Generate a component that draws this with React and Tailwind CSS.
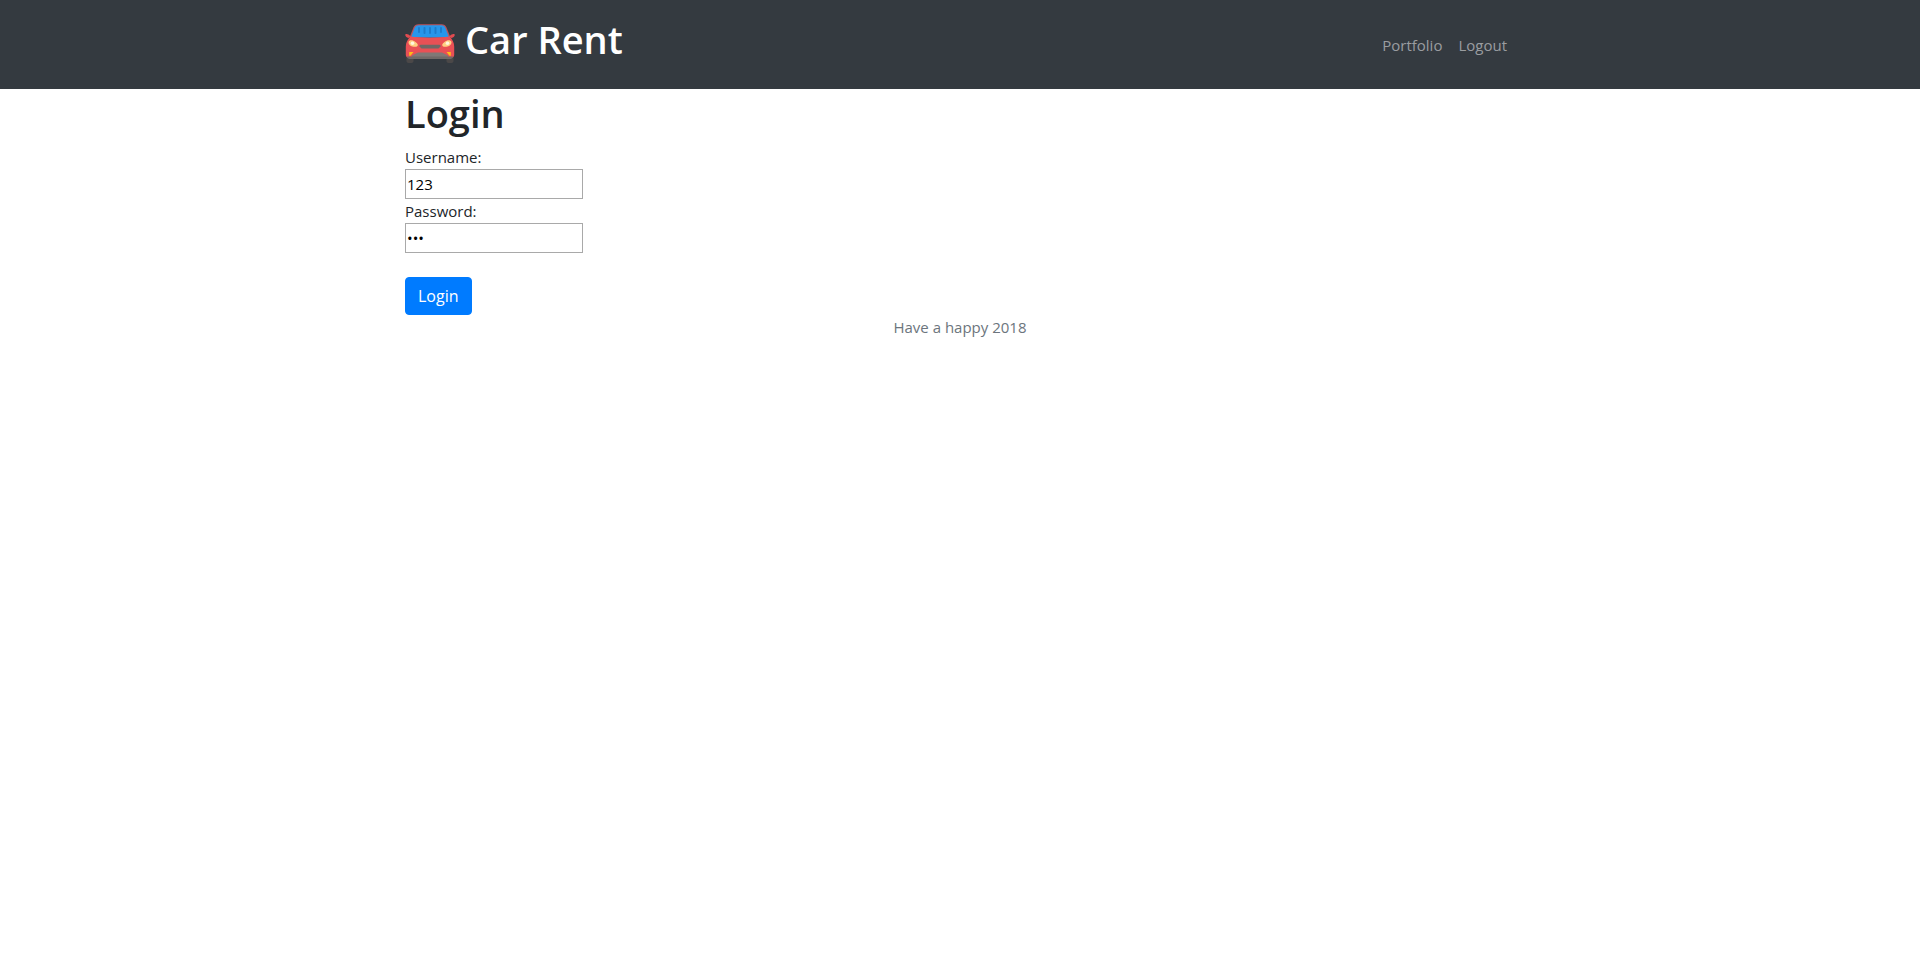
function CarIcon() {
  return (
    <svg viewBox="0 0 50 40" className="h-10 w-[50px] shrink-0" aria-hidden="true">
      <rect x="1.5" y="33" width="7" height="7" rx="2" fill="#4b4848" />
      <rect x="41.5" y="33" width="7" height="7" rx="2" fill="#4b4848" />
      <path d="M13.500 1.200H36.500C39 1.200 40.500 2.200 41.500 4.500L45.500 14.500H4.500L8.500 4.500C9.500 2.200 11 1.200 13.500 1.200Z" fill="#b9525b" />
      <path d="M13.800 2.200H36.200C38.500 2.200 39.500 3 40.400 5L44 14.500H6L9.600 5C10.500 3 11.500 2.200 13.800 2.200Z" fill="#2796ea" />
      <path d="M14 5v4M19.500 5v5M25 5v5M30.500 5v5M36 5v4" stroke="#1e7ccb" strokeWidth="2" strokeLinecap="round" />
      <path d="M0.200 11.800C0.200 10.800 2 10.700 3.500 11.500L6 13.500L3.500 15C1.500 14.500 0.200 13.200 0.200 11.800ZM49.800 11.800C49.800 10.800 48 10.700 46.500 11.500L44 13.500L46.500 15C48.500 14.500 49.800 13.200 49.800 11.800Z" fill="#e24b50" />
      <path d="M5.500 13.500C16 15 34 15 44.500 13.500C47.500 16.500 49.200 19.500 49.200 23.500V32C49.200 34 47.500 35 45.500 35H4.500C2.500 35 0.800 34 0.800 32V23.500C0.800 19.500 2.500 16.500 5.500 13.500Z" fill="#e95055" />
      <path d="M15.500 21.800H34.500L36 23L33.500 25.600H16.500L14 23Z" fill="#706765" />
      <path d="M13 29.500H37L43 32.500V35.500H7V32.500Z" fill="#807876" />
      <path d="M2 33.500H48C47.500 35.500 46.500 36 44.500 36H5.500C3.500 36 2.500 35.500 2 33.500Z" fill="#706967" />
      <path d="M3.500 19C4.500 16.500 8 17 10.500 19C13 20.800 13.500 22.500 12 23.400C9.500 24.600 3.500 23.500 3.500 19ZM46.500 19C45.500 16.500 42 17 39.500 19C37 20.800 36.500 22.500 38 23.400C40.500 24.600 46.500 23.500 46.500 19Z" fill="#ffcf82" />
      <circle cx="7.500" cy="20.200" r="1.800" fill="#fff6df" />
      <circle cx="42.500" cy="20.200" r="1.800" fill="#fff6df" />
      <path d="M4.200 29H8.500L5.500 32.800H4.200ZM45.800 29H41.500L44.500 32.800H45.800Z" fill="#ffbd19" />
    </svg>
  );
}

function Field({ id, label, type, value }) {
  return (
    <div className="flex flex-col items-start">
      <label htmlFor={id}>{label}</label>
      <input
        id={id}
        name={id}
        type={type}
        defaultValue={value}
        className="h-[30px] w-[178px] border border-[#a9a9a9] bg-white px-px text-black outline-none"
      />
    </div>
  );
}

export default function App() {
  return (
    <div className="font-['Open_Sans','Noto_Sans',sans-serif] text-[15px] leading-6 text-[#212529]">
      <header className="bg-[#343a40]">
        <nav className="mx-auto flex max-w-[1140px] items-center justify-between px-[15px] pt-[15px] pb-[14px]">
          <a href="#home" className="flex items-end gap-[10px] pb-3 text-white">
            <CarIcon />
            <h1 className="text-[38px] leading-[48px] font-semibold">Car Rent</h1>
          </a>
          <div className="flex gap-4 pr-2 text-[#9a9da0]">
            <a href="#portfolio">Portfolio</a>
            <a href="#logout">Logout</a>
          </div>
        </nav>
      </header>
      <main className="mx-auto max-w-[1140px] px-[15px]">
        <h2 className="mb-2 text-[38px] leading-[48px] font-semibold">Login</h2>
        <form className="flex flex-col items-start" onSubmit={(e) => e.preventDefault()}>
          <Field id="username" label="Username:" type="text" value="123" />
          <Field id="password" label="Password:" type="password" value="123" />
          <button type="submit" className="mt-6 rounded border border-[#007bff] bg-[#007bff] px-3 py-[6px] text-base text-white">
            Login
          </button>
        </form>
      </main>
      <footer className="text-center text-[#6c757d]">Have a happy 2018</footer>
    </div>
  );
}
